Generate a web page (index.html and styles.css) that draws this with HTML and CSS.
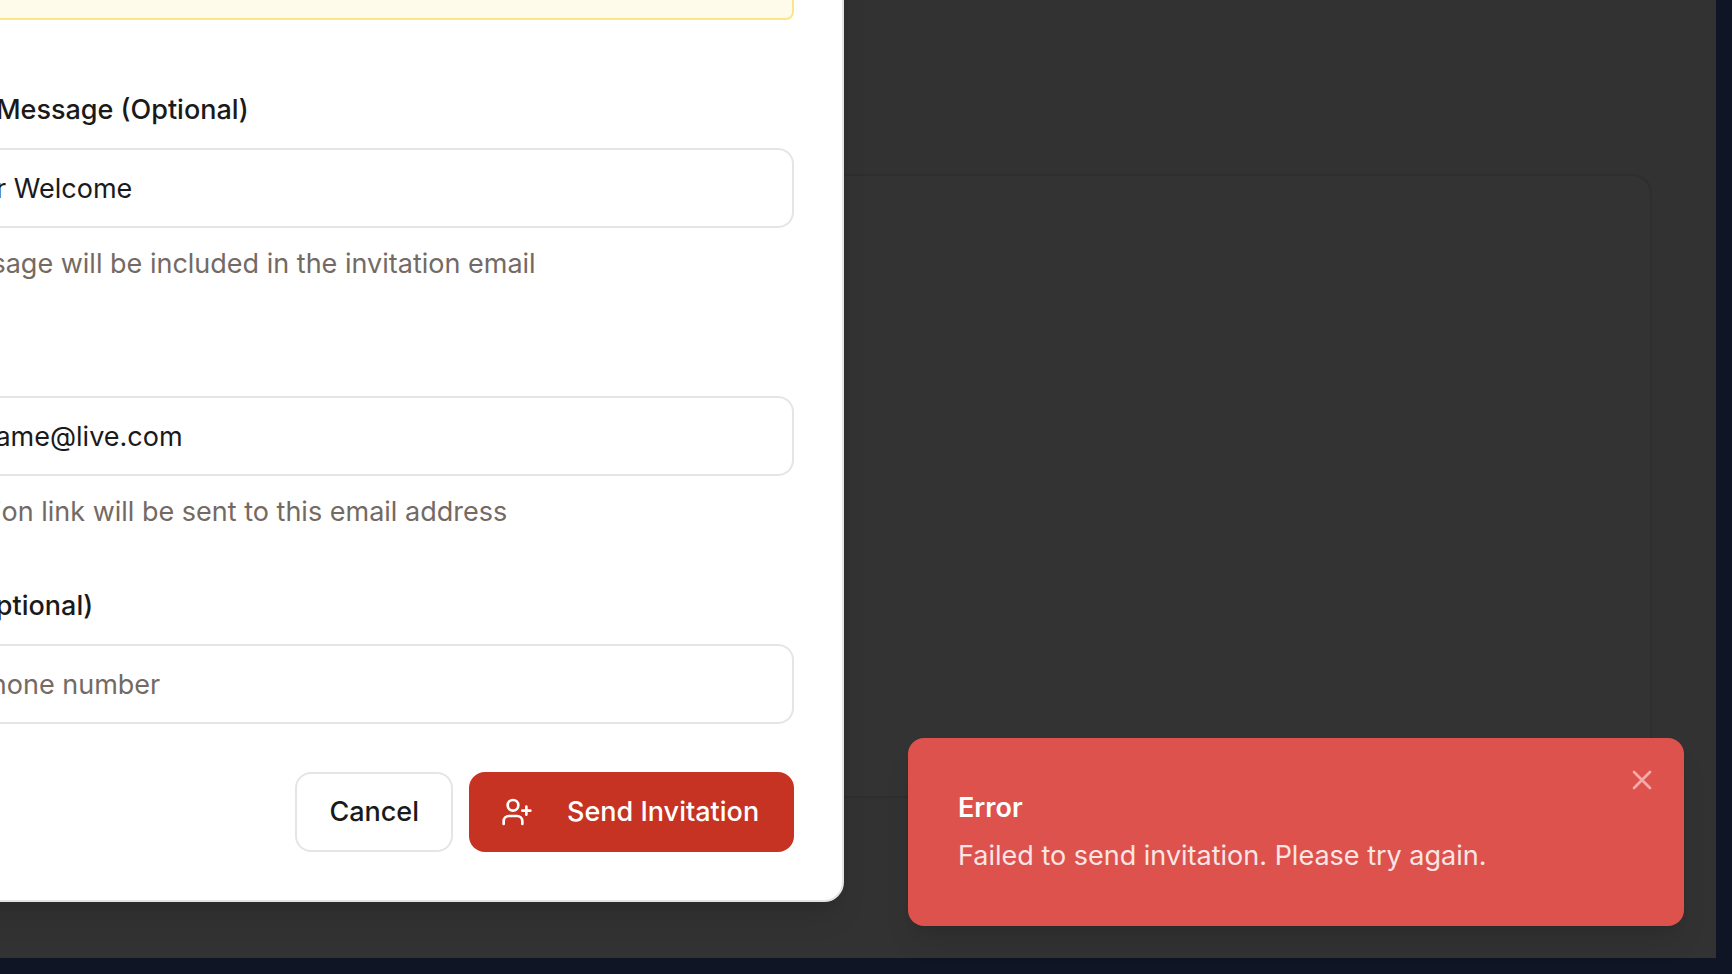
FILE: index.html
```html
<!DOCTYPE html>
<html lang="en">
<head>
<meta charset="utf-8">
<title>Send Invitation</title>
<link rel="stylesheet" href="styles.css">
</head>
<body>
<div class="frame">
  <main class="surface">
    <section class="card"></section>
  </main>
</div>

<form class="dialog" role="dialog" aria-label="Send Invitation">
  <div class="notice"></div>
  <div class="field">
    <label class="label" for="message">Personal Message (Optional)</label>
    <input class="input" id="message" type="text" value="Member Welcome">
    <p class="help">This message will be included in the invitation email</p>
  </div>
  <div class="field">
    <label class="label" for="email">Email</label>
    <input class="input" id="email" type="email" value="a.username@live.com">
    <p class="help">An invitation link will be sent to this email address</p>
  </div>
  <div class="field">
    <label class="label" for="phone">Phone (Optional)</label>
    <input class="input" id="phone" type="tel" placeholder="Enter phone number">
  </div>
  <div class="actions">
    <button class="button button-outline" type="button">Cancel</button>
    <button class="button button-primary" type="button">
      <svg class="icon" viewBox="0 0 24 24" aria-hidden="true">
        <path d="M16 21v-2a4 4 0 0 0-4-4H6a4 4 0 0 0-4 4v2"/>
        <circle cx="9" cy="7" r="4"/>
        <path d="M19 8v6M22 11h-6"/>
      </svg>
      <span>Send Invitation</span>
    </button>
  </div>
</form>

<div class="toast" role="alert">
  <div class="toast-title">Error</div>
  <div class="toast-text">Failed to send invitation. Please try again.</div>
  <button class="toast-close" type="button" aria-label="Close">
    <svg class="icon" viewBox="0 0 24 24" aria-hidden="true">
      <path d="M18 6 6 18M6 6l12 12"/>
    </svg>
  </button>
</div>
</body>
</html>
```
FILE: styles.css
```css
* {
  box-sizing: border-box;
}

body {
  position: relative;
  margin: 0;
  min-height: 100vh;
  overflow: hidden;
  background: #0f1524;
  color: #1a1a1a;
  font-family: Inter, "Liberation Sans", sans-serif;
  font-size: 27px;
  line-height: 40px;
}

.frame {
  display: flex;
  min-height: 100vh;
  padding: 0 16px 16px 0;
}

.surface {
  display: flex;
  flex: 1;
  padding: 174px 64px 160px;
  background: #323232;
}

.card {
  flex: 1;
  border: 2px solid #2e2e2e;
  border-radius: 20px;
  background: #333333;
}

.dialog {
  position: absolute;
  right: 888px;
  bottom: 72px;
  left: -174px;
  display: flex;
  flex-direction: column;
  gap: 60px;
  padding: 48px;
  border: 2px solid #e2e5e6;
  border-radius: 20px;
  background: #ffffff;
  box-shadow: 0 20px 30px -6px rgba(0, 0, 0, 0.1), 0 8px 12px -8px rgba(0, 0, 0, 0.1);
}

.notice {
  height: 120px;
  margin-bottom: 16px;
  border: 2px solid #fbe58b;
  border-radius: 8px;
  background: #fffbeb;
}

.field {
  display: flex;
  flex-direction: column;
}

.label {
  margin-bottom: 24px;
  font-weight: 500;
  line-height: 28px;
}

.input {
  width: 100%;
  height: 80px;
  padding: 0 22px;
  border: 2px solid #e5e5e5;
  border-radius: 16px;
  background: #ffffff;
  color: inherit;
  font: inherit;
}

.input::placeholder {
  color: #746a63;
  opacity: 1;
}

.help {
  margin: 16px 0 0;
  color: #746a63;
}

.actions {
  display: flex;
  justify-content: flex-end;
  gap: 16px;
  margin-top: -12px;
}

.button {
  display: flex;
  align-items: center;
  height: 80px;
  padding: 0 32px;
  border: 0;
  border-radius: 16px;
  font: inherit;
  font-weight: 500;
}

.button-outline {
  border: 2px solid #e5e5e5;
  background: #ffffff;
  color: #1a1a1a;
}

.button-primary {
  gap: 34px;
  min-width: 325px;
  background: #c73322;
  color: #ffffff;
}

.icon {
  display: block;
  width: 32px;
  height: 32px;
  fill: none;
  stroke: currentColor;
  stroke-width: 2;
  stroke-linecap: round;
  stroke-linejoin: round;
}

.toast {
  position: absolute;
  right: 48px;
  bottom: 48px;
  display: flex;
  flex-direction: column;
  gap: 8px;
  width: 776px;
  padding: 50px;
  border-radius: 16px;
  background: #dd524c;
  color: #ffffff;
  box-shadow: 0 20px 30px -6px rgba(0, 0, 0, 0.1), 0 8px 12px -8px rgba(0, 0, 0, 0.1);
}

.toast-title {
  font-weight: 600;
}

.toast-text {
  color: #fae5e4;
}

.toast-close {
  position: absolute;
  top: 26px;
  right: 26px;
  padding: 0;
  border: 0;
  background: none;
  color: #f5abaa;
}
```
